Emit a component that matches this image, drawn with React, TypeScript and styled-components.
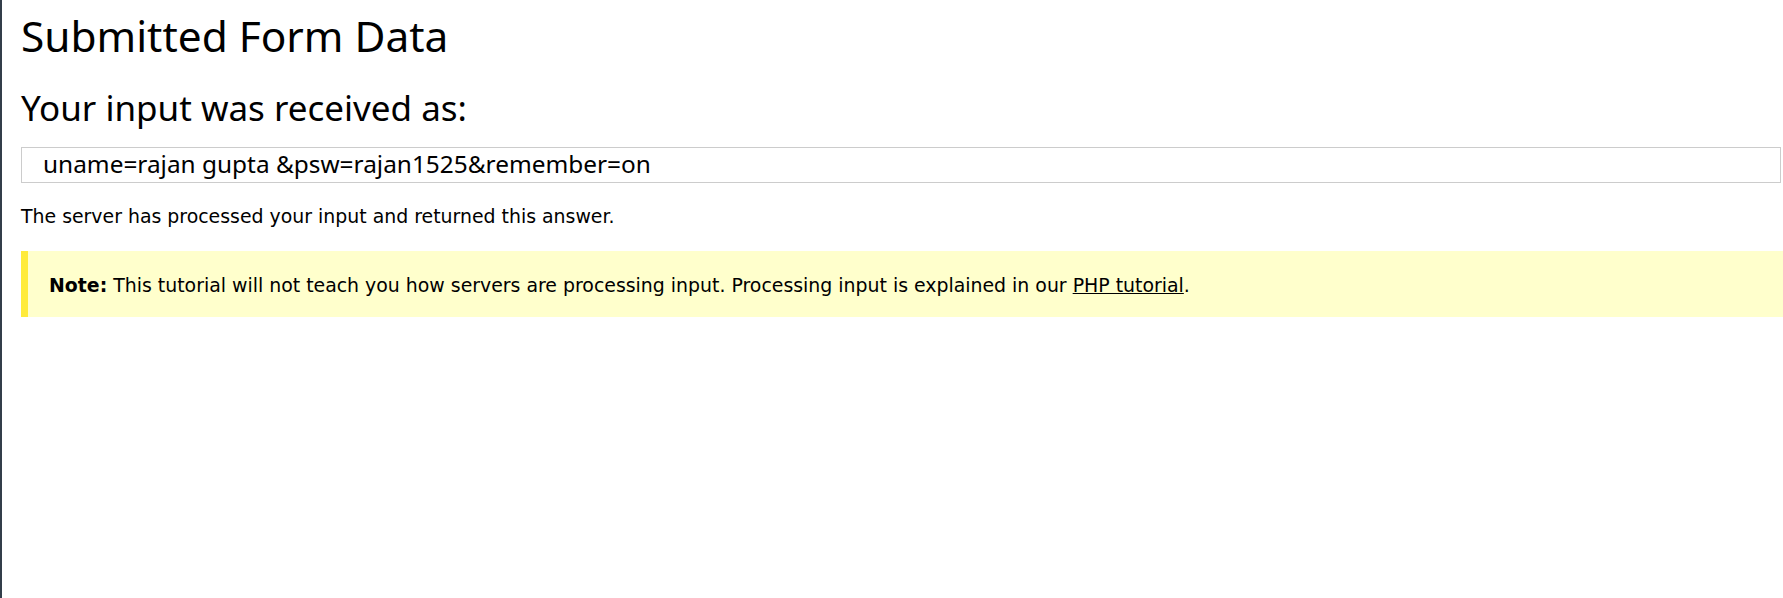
import styled, { createGlobalStyle } from "styled-components";

const GlobalStyle = createGlobalStyle`
  html, body {
    margin: 0;
    padding: 0;
    background: #fff;
  }
`;

const Page = styled.div`
  min-height: 100vh;
  box-sizing: border-box;
  border-left: 2px solid #323e4a;
  padding: 8px 0 0 19px;
  color: #000;
  font-family: "DejaVu Sans", Verdana, sans-serif;
`;

const Title = styled.h1`
  margin: 0;
  font-family: "Noto Sans", "Open Sans", sans-serif;
  font-size: 42.4px;
  font-weight: 400;
  line-height: 55px;
`;

const SubTitle = styled.h2`
  margin: 23px 0 0;
  font-family: "Noto Sans", "Open Sans", sans-serif;
  font-size: 35px;
  font-weight: 400;
  line-height: 44px;
`;

const ResultBox = styled.div`
  margin: 17px 2px 0 0;
  height: 36px;
  box-sizing: border-box;
  border: 1px solid #cccccc;
  padding: 0 0 0 21px;
  font-family: "Noto Sans", "Open Sans", sans-serif;
  font-size: 24.4px;
  line-height: 31px;
  white-space: nowrap;
`;

const Text = styled.p`
  margin: 21px 0 0;
  font-size: 18.9px;
  line-height: 24px;
`;

const Note = styled.div`
  margin-top: 23px;
  box-sizing: border-box;
  height: 66px;
  background: #ffffcc;
  border-left: 7px solid #ffeb3b;
  padding: 22px 0 0 21px;
  font-size: 18.9px;
  line-height: 24px;
  white-space: nowrap;
`;

const Link = styled.a`
  color: #000;
  text-decoration: underline;
`;

export default function App() {
  return (
    <>
      <GlobalStyle />
      <Page>
        <Title>Submitted Form Data</Title>
        <SubTitle>Your input was received as:</SubTitle>
        <ResultBox>uname=rajan gupta &amp;psw=rajan1525&amp;remember=on</ResultBox>
        <Text>The server has processed your input and returned this answer.</Text>
        <Note>
          <b>Note:</b> This tutorial will not teach you how servers are processing input.
          Processing input is explained in our <Link href="#">PHP tutorial</Link>.
        </Note>
      </Page>
    </>
  );
}
